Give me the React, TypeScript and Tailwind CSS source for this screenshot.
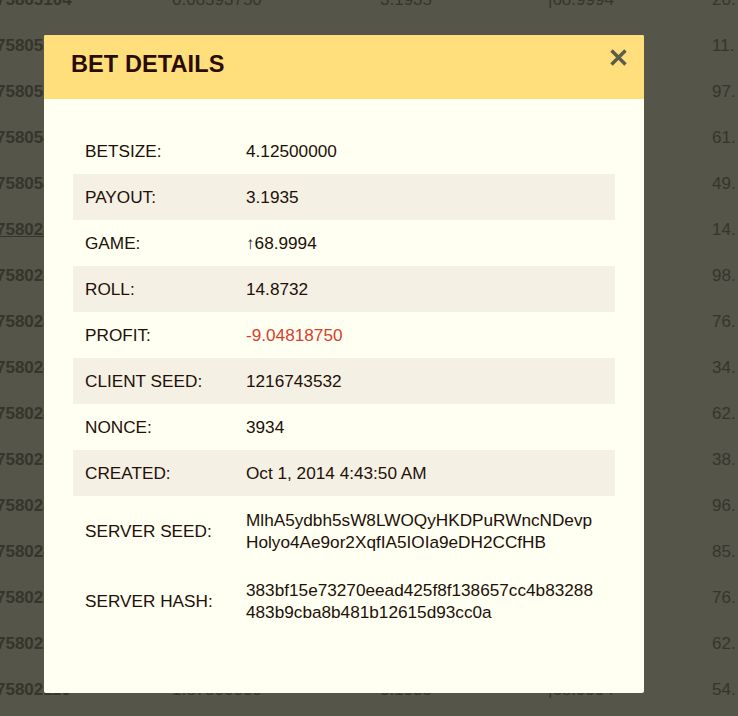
import React from 'react';

const BG_ROWS = [
  ['75865104', '0.08593750', '3.1935', '|68.9994', '20.'],
  ['75805514', '3.00000000', '3.1935', '↑68.9994', '11.'],
  ['75805513', '1.20000000', '3.1935', '↑68.9994', '97.'],
  ['75805412', '0.50000000', '3.1935', '↑68.9994', '61.'],
  ['75805411', '2.06250000', '3.1935', '↑68.9994', '49.'],
  ['75802410', '4.12500000', '3.1935', '↑68.9994', '14.'],
  ['75802409', '2.06250000', '3.1935', '↑68.9994', '98.'],
  ['75802408', '1.03125000', '3.1935', '↑68.9994', '76.'],
  ['75802407', '0.51562500', '3.1935', '↑68.9994', '34.'],
  ['75802406', '0.25781250', '3.1935', '↑68.9994', '62.'],
  ['75802405', '0.12890625', '3.1935', '↑68.9994', '38.'],
  ['75802404', '0.06445312', '3.1935', '↑68.9994', '96.'],
  ['75802403', '8.25000000', '3.1935', '↑68.9994', '85.'],
  ['75802302', '4.12500000', '3.1935', '↑68.9994', '76.'],
  ['75802301', '2.06250000', '3.1935', '↑68.9994', '62.'],
  ['75802110', '1.87500000', '3.1935', '|68.9994', '54.'],
];

const DETAILS: { label: string; value: React.ReactNode; tall?: boolean; red?: boolean }[] = [
  { label: 'BETSIZE:', value: '4.12500000' },
  { label: 'PAYOUT:', value: '3.1935' },
  { label: 'GAME:', value: <><span className="text-[#1a1a40]">↑</span>68.9994</> },
  { label: 'ROLL:', value: '14.8732' },
  { label: 'PROFIT:', value: '-9.04818750', red: true },
  { label: 'CLIENT SEED:', value: '1216743532' },
  { label: 'NONCE:', value: '3934' },
  { label: 'CREATED:', value: 'Oct 1, 2014 4:43:50 AM' },
  { label: 'SERVER SEED:', value: <>MlhA5ydbh5sW8LWOQyHKDPuRWncNDevp<br />Holyo4Ae9or2XqfIA5IOIa9eDH2CCfHB</>, tall: true },
  { label: 'SERVER HASH:', value: <>383bf15e73270eead425f8f138657cc4b83288<br />483b9cba8b481b12615d93cc0a</>, tall: true },
];

export default function App() {
  return (
    <div className="relative w-[738px] h-[716px] overflow-hidden bg-[#55554a] text-[17px] text-[#35352b] [font-family:'Liberation_Sans',Arial,sans-serif]">
      {/* dimmed bets table behind the modal */}
      <div className="flex flex-col -mt-[23px] ml-[-4px]">
        {BG_ROWS.map((r, i) => (
          <div key={i} className="flex items-center h-[46px] shrink-0">
            <span className={`w-[176px] font-bold ${i === 5 ? 'underline' : ''}`}>{r[0]}</span>
            <span className="w-[208px]">{r[1]}</span>
            <span className="w-[168px]">{r[2]}</span>
            <span className="w-[164px]">{r[3]}</span>
            <span>{r[4]}</span>
          </div>
        ))}
      </div>

      {/* modal */}
      <div className="absolute left-[44px] top-[35px] w-[600px] h-[658px] rounded-[2px] overflow-hidden bg-[#fffff2] text-[#221008] text-[17.2px]">
        <div className="relative h-[64px] bg-[#ffdf7b] flex items-center pl-[27px] pb-[4px]">
          <h2 className="font-bold text-[23.5px] text-[#2a0c06] tracking-[0.1px]">BET DETAILS</h2>
          <button className="absolute right-[16px] top-[13px] w-[19px] h-[19px] text-[#5c5c4a]">
            <svg viewBox="0 0 19 19" className="w-full h-full">
              <path d="M2.5 2.5 L16.5 16.5 M16.5 2.5 L2.5 16.5" stroke="currentColor" strokeWidth="3.4" />
            </svg>
          </button>
        </div>
        <div className="pt-[29px] px-[29px]">
          <div className="flex flex-col">
            {DETAILS.map((d, i) => (
              <div key={d.label} className={`flex items-center leading-[22px] ${d.tall ? 'py-[13px]' : 'py-3'} ${i % 2 === 1 && !d.tall ? 'bg-[#f5f0e4]' : ''}`}>
                <span className="w-[161px] pl-3 shrink-0">{d.label}</span>
                <span className={`pl-3 ${d.red ? 'text-[#d8402c]' : ''}`}>{d.value}</span>
              </div>
            ))}
          </div>
        </div>
      </div>
    </div>
  );
}
